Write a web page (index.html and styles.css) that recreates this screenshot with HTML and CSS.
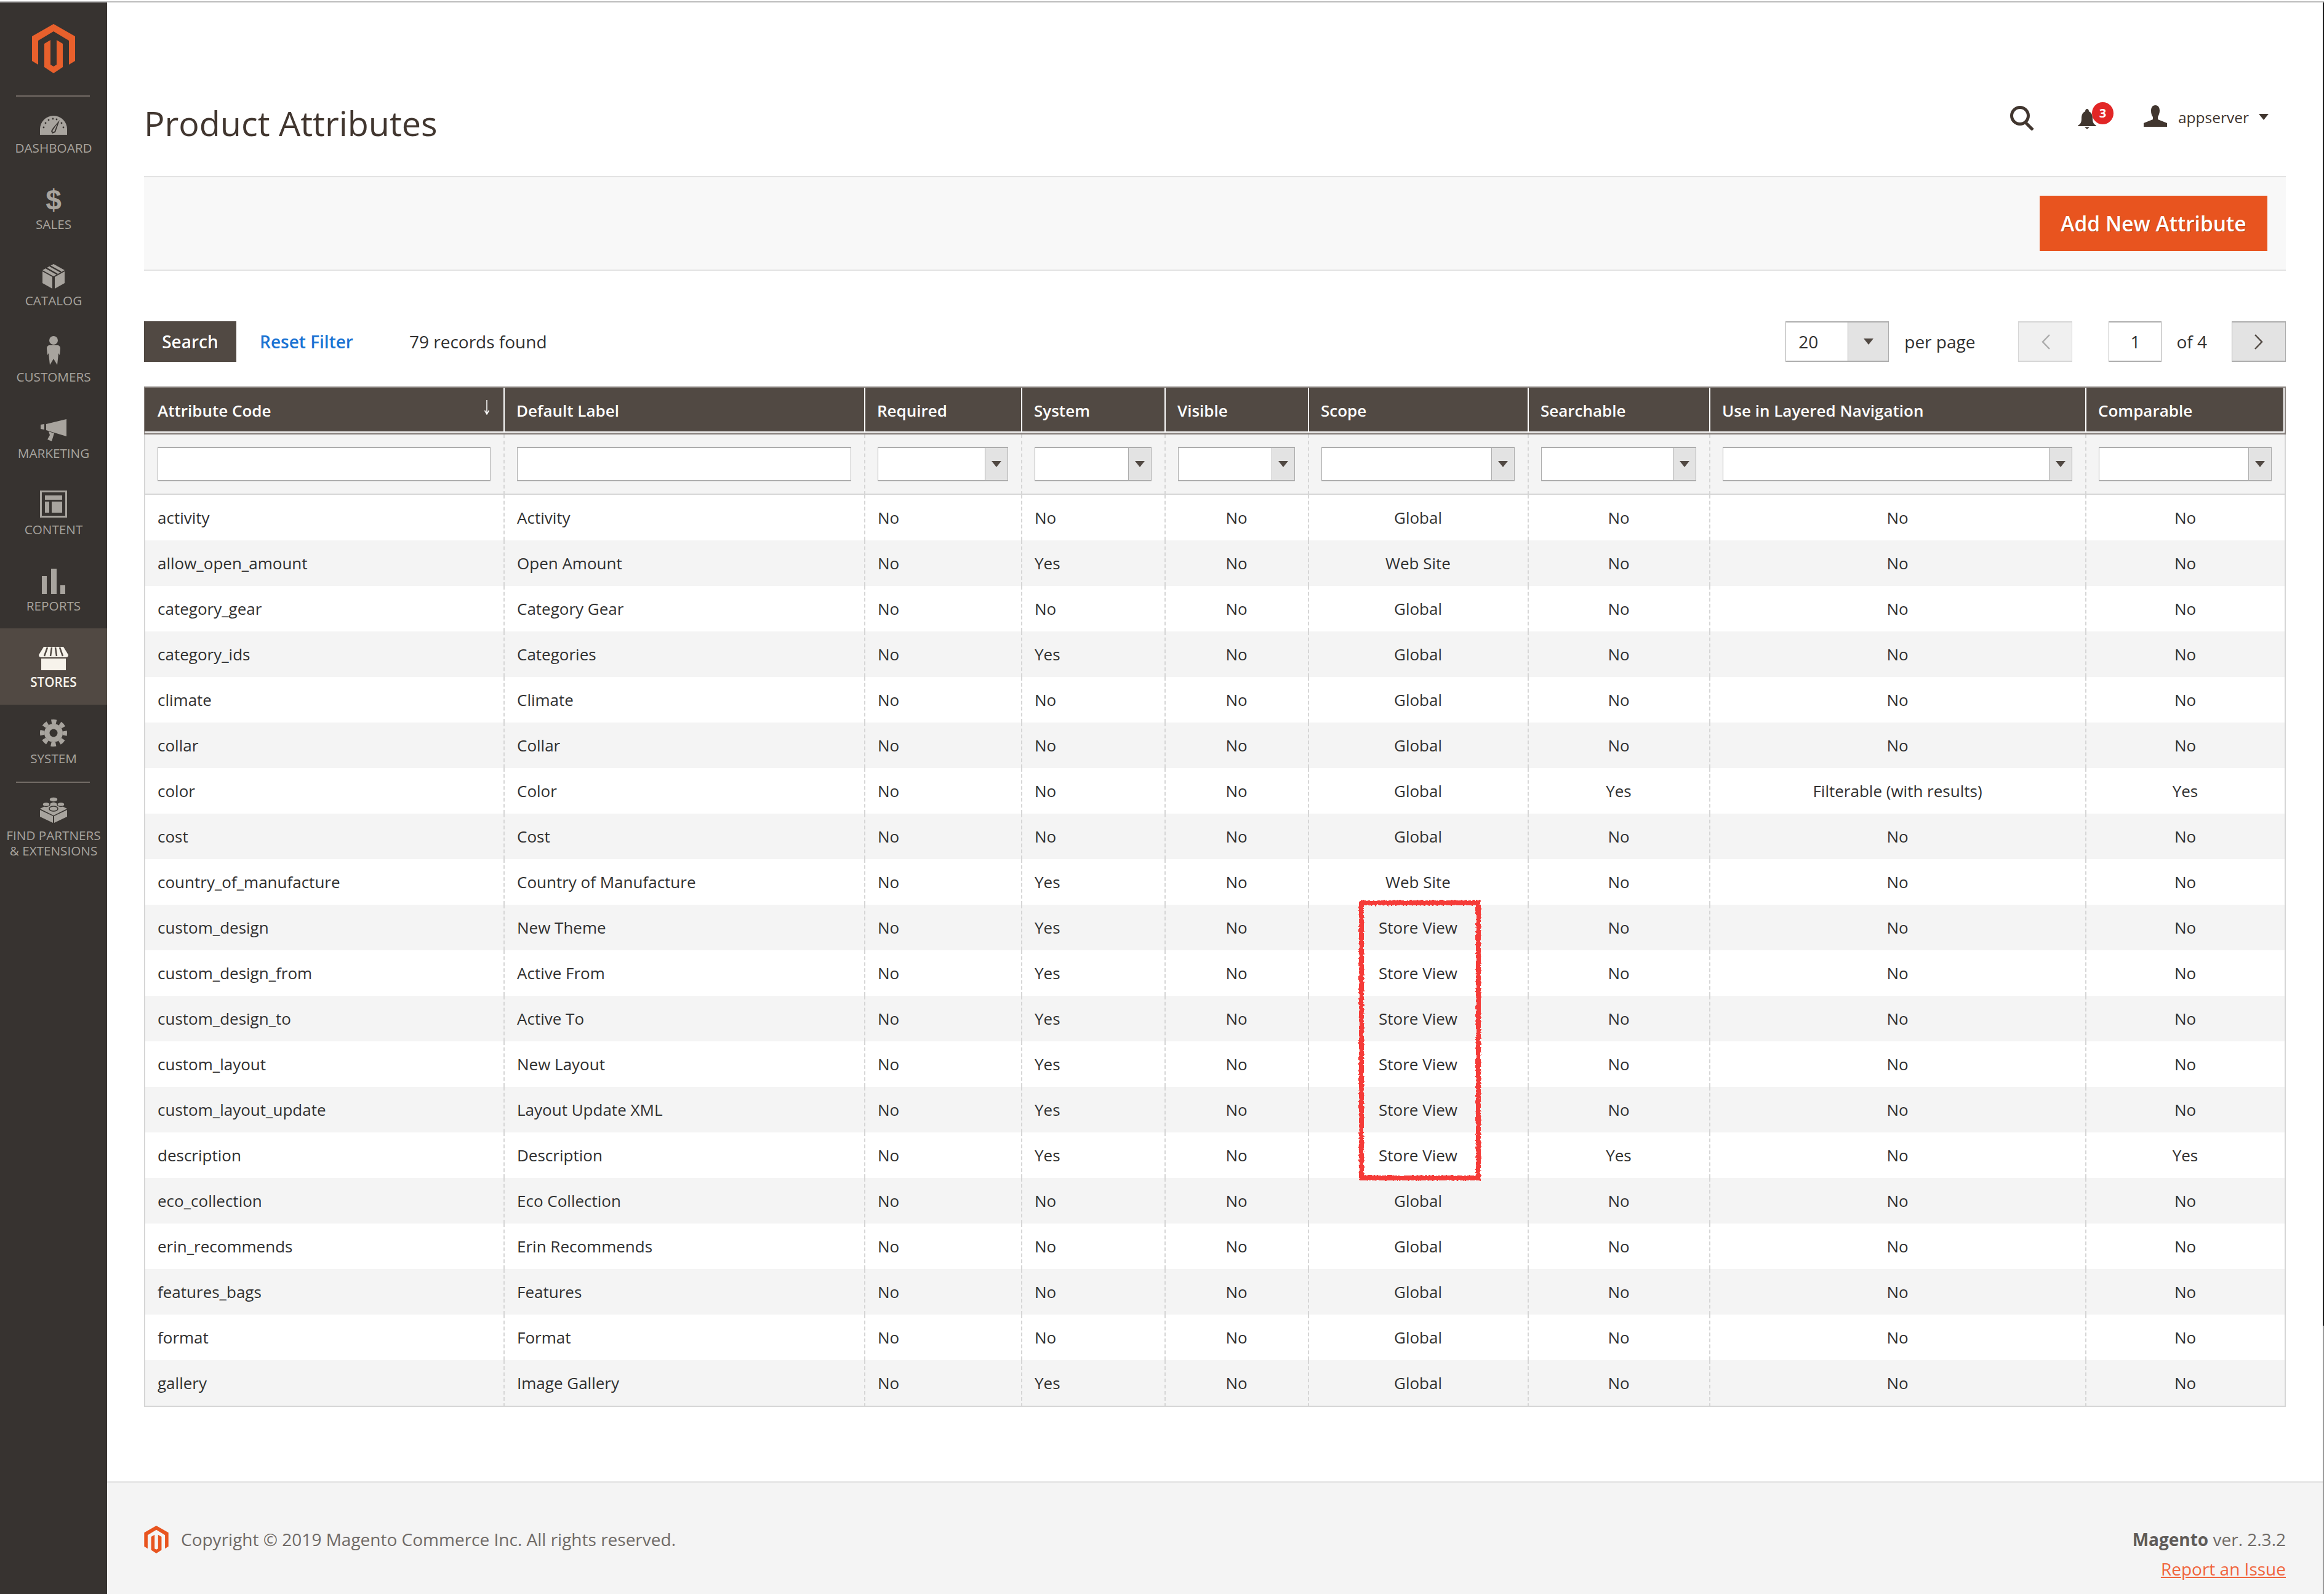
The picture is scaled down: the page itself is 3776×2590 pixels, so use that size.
FILE: index.html
```html
<!DOCTYPE html>
<html lang="en">
<head>
  <meta charset="UTF-8">
  <title>Product Attributes</title>
  <link rel="stylesheet" href="styles.css">
</head>
<body>
  <svg class="defs" width="0" height="0">
    <defs>
      <symbol id="logo" viewBox="0 0 70 80">
        <polygon points="35,0 70,20 70,60 60,66 60,27 35,12 10,27 10,66 0,60 0,20"/>
        <polygon points="20,32 30,26 30,66 35,69 40,66 40,26 50,32 50,70 35,80 20,70"/>
      </symbol>
    </defs>
  </svg>

  <div class="window-top"></div>
  <div class="shell">
    <nav class="sidebar">
      <a class="brand"><svg width="70" height="80"><use href="#logo"/></svg></a>
      <ul class="menu">
        <li class="menu-item">
          <span class="menu-icon">
            <svg class="icon-dashboard" width="44" height="31" viewBox="0 0 44 31">
              <path class="ico" d="M0 31V22A22 22 0 0 1 44 22V31Z"/>
              <g class="ico-cut">
                <circle cx="6" cy="19" r="1.4"/><circle cx="9" cy="12" r="1.4"/><circle cx="14" cy="7" r="1.4"/>
                <circle cx="21" cy="5" r="1.4"/><circle cx="27" cy="6" r="1.4"/><circle cx="35" cy="12" r="1.4"/><circle cx="38" cy="19" r="1.4"/>
                <polygon points="32,7 25,27 20,29 18,25 21,20"/>
              </g>
              <polygon class="ico" points="28.5,12.5 23.5,25.5 20.5,26.5 20.5,24"/>
            </svg>
          </span>
          <span class="menu-label">Dashboard</span>
        </li>
        <li class="menu-item">
          <span class="menu-icon"><span class="dollar">$</span></span>
          <span class="menu-label">Sales</span>
        </li>
        <li class="menu-item">
          <span class="menu-icon">
            <svg width="36" height="40" viewBox="0 0 36 40">
              <polygon class="ico" points="18,0 36,10 18,20 0,10"/>
              <path class="ico-line" d="M6 6.5L24 16.5M12 3L30 13"/>
              <polygon class="ico" points="0,12 16,21 16,40 0,31"/>
              <polygon class="ico" points="36,12 20,21 20,40 36,31"/>
            </svg>
          </span>
          <span class="menu-label">Catalog</span>
        </li>
        <li class="menu-item">
          <span class="menu-icon">
            <svg width="22" height="47" viewBox="0 0 22 47">
              <circle class="ico" cx="11" cy="7" r="7"/>
              <path class="ico" d="M5 15H17C20 15 22 17 22 20L21 31L19 28L17 47L11 37L5 47L3 28L1 31L0 20C0 17 2 15 5 15Z"/>
            </svg>
          </span>
          <span class="menu-label">Customers</span>
        </li>
        <li class="menu-item">
          <span class="menu-icon">
            <svg width="42" height="36" viewBox="0 0 42 36">
              <polygon class="ico" points="0,9 6,8 6,17 0,16"/>
              <polygon class="ico" points="9,8 42,0 42,28 9,18"/>
              <polygon class="ico" points="13,20 22,23 18,36 11,33 15,26"/>
            </svg>
          </span>
          <span class="menu-label">Marketing</span>
        </li>
        <li class="menu-item">
          <span class="menu-icon">
            <svg width="44" height="44" viewBox="0 0 44 44">
              <path class="ico" fill-rule="evenodd" d="M0 0H44V44H0ZM3 3V41H41V3Z"/>
              <rect class="ico" x="8" y="8" width="28" height="7"/>
              <rect class="ico" x="8" y="18" width="7" height="18"/>
              <rect class="ico" x="19" y="18" width="17" height="18"/>
            </svg>
          </span>
          <span class="menu-label">Content</span>
        </li>
        <li class="menu-item">
          <span class="menu-icon">
            <svg width="38" height="41" viewBox="0 0 38 41">
              <rect class="ico" x="0" y="12" width="8" height="29"/>
              <rect class="ico" x="15" y="0" width="9" height="41"/>
              <rect class="ico" x="30" y="27" width="8" height="14"/>
            </svg>
          </span>
          <span class="menu-label">Reports</span>
        </li>
        <li class="menu-item active">
          <span class="menu-icon">
            <svg width="48" height="38" viewBox="0 0 48 38">
              <path class="ico" d="M8 0H40L48 13Q48 17 44 17H4Q0 17 0 13Z"/>
              <path class="ico-line" d="M14 1L9 15M21 1L19 15M27 1L29 15M34 1L39 15"/>
              <rect class="ico" x="4" y="19" width="40" height="19"/>
            </svg>
          </span>
          <span class="menu-label">Stores</span>
        </li>
        <li class="menu-item">
          <span class="menu-icon">
            <svg width="44" height="44" viewBox="0 0 44 44">
              <circle class="ico" cx="22" cy="22" r="15"/>
              <circle class="gear-teeth" cx="22" cy="22" r="18.5"/>
              <circle class="ico-cut" cx="22" cy="22" r="6.5"/>
            </svg>
          </span>
          <span class="menu-label">System</span>
        </li>
        <li class="menu-item partners">
          <span class="menu-icon">
            <svg width="44" height="43" viewBox="0 0 44 43">
              <polygon class="ico" points="22,9 44,20 22,31 0,20"/>
              <polygon class="ico" points="0,22 21,32 21,43 0,33"/>
              <polygon class="ico" points="44,22 23,32 23,43 44,33"/>
              <g class="stud">
                <ellipse cx="22" cy="5" rx="7" ry="4"/>
                <ellipse cx="10" cy="13" rx="6" ry="3.5"/>
                <ellipse cx="34" cy="13" rx="6" ry="3.5"/>
                <ellipse cx="22" cy="20" rx="7" ry="4"/>
              </g>
            </svg>
          </span>
          <span class="menu-label">Find Partners<br>&amp; Extensions</span>
        </li>
      </ul>
    </nav>

    <main class="main">
      <header class="page-header">
        <h1 class="page-title">Product Attributes</h1>
        <div class="page-actions">
          <svg class="search-icon" width="41" height="40" viewBox="0 0 41 40">
            <circle cx="17" cy="16" r="13.5"/>
            <path d="M26 27L38 39"/>
          </svg>
          <span class="notifications">
            <svg width="30" height="33" viewBox="0 0 30 33">
              <path d="M15 0C17 0 18 2 18 4C23 6 24 11 24 16C24 22 26 25 30 27V28H0V27C4 25 6 22 6 16C6 11 7 6 12 4C12 2 13 0 15 0Z"/>
              <path d="M11 29.5H19L15 33Z"/>
            </svg>
            <span class="badge">3</span>
          </span>
          <span class="user">
            <svg class="user-icon" width="38" height="35" viewBox="0 0 38 35">
              <path d="M19 0C24 0 26 4 26 9C26 13 24 17 23 19V23L38 29V35H0V29L15 23V19C13 17 12 13 12 9C12 4 14 0 19 0Z"/>
            </svg>
            <span class="user-name">appserver</span>
            <span class="user-arrow"></span>
          </span>
        </div>
      </header>

      <div class="action-bar">
        <button class="btn-primary">Add New Attribute</button>
      </div>

      <div class="grid-toolbar">
        <button class="btn-search">Search</button>
        <a class="reset-link">Reset Filter</a>
        <span class="records">79 records found</span>
        <div class="pager">
          <div class="per-page-select">
            <span class="per-page-value">20</span>
            <span class="select-arrow"></span>
          </div>
          <span class="per-page-label">per page</span>
          <button class="pager-btn prev">
            <svg width="15" height="25" viewBox="0 0 15 25"><path d="M14 1L3 12.5L14 24"/></svg>
          </button>
          <span class="page-input">1</span>
          <span class="page-total">of 4</span>
          <button class="pager-btn next">
            <svg width="15" height="25" viewBox="0 0 15 25"><path d="M1 1L12 12.5L1 24"/></svg>
          </button>
        </div>
      </div>

      <div class="grid-wrap">
        <table class="grid">
          <colgroup>
            <col class="col-code"><col class="col-label"><col class="col-required"><col class="col-system">
            <col class="col-visible"><col class="col-scope"><col class="col-searchable"><col class="col-layered"><col class="col-comparable">
          </colgroup>
          <thead>
            <tr class="head-row">
              <th class="sorted">Attribute Code
                <svg class="sort-arrow" width="10" height="24" viewBox="0 0 10 24"><path d="M5 0V23M1.5 17L5 23L8.5 17"/></svg>
              </th>
              <th>Default Label</th><th>Required</th><th>System</th><th>Visible</th><th>Scope</th><th>Searchable</th><th>Use in Layered Navigation</th><th>Comparable</th>
            </tr>
            <tr class="filter-row">
              <td><input class="filter-input" type="text"></td>
              <td><input class="filter-input" type="text"></td>
              <td><div class="filter-select"><span class="select-arrow"></span></div></td>
              <td><div class="filter-select"><span class="select-arrow"></span></div></td>
              <td><div class="filter-select"><span class="select-arrow"></span></div></td>
              <td><div class="filter-select"><span class="select-arrow"></span></div></td>
              <td><div class="filter-select"><span class="select-arrow"></span></div></td>
              <td><div class="filter-select"><span class="select-arrow"></span></div></td>
              <td><div class="filter-select"><span class="select-arrow"></span></div></td>
            </tr>
          </thead>
          <tbody>
            <tr><td>activity</td><td>Activity</td><td>No</td><td>No</td><td>No</td><td>Global</td><td>No</td><td>No</td><td>No</td></tr>
            <tr><td>allow_open_amount</td><td>Open Amount</td><td>No</td><td>Yes</td><td>No</td><td>Web Site</td><td>No</td><td>No</td><td>No</td></tr>
            <tr><td>category_gear</td><td>Category Gear</td><td>No</td><td>No</td><td>No</td><td>Global</td><td>No</td><td>No</td><td>No</td></tr>
            <tr><td>category_ids</td><td>Categories</td><td>No</td><td>Yes</td><td>No</td><td>Global</td><td>No</td><td>No</td><td>No</td></tr>
            <tr><td>climate</td><td>Climate</td><td>No</td><td>No</td><td>No</td><td>Global</td><td>No</td><td>No</td><td>No</td></tr>
            <tr><td>collar</td><td>Collar</td><td>No</td><td>No</td><td>No</td><td>Global</td><td>No</td><td>No</td><td>No</td></tr>
            <tr><td>color</td><td>Color</td><td>No</td><td>No</td><td>No</td><td>Global</td><td>Yes</td><td>Filterable (with results)</td><td>Yes</td></tr>
            <tr><td>cost</td><td>Cost</td><td>No</td><td>No</td><td>No</td><td>Global</td><td>No</td><td>No</td><td>No</td></tr>
            <tr><td>country_of_manufacture</td><td>Country of Manufacture</td><td>No</td><td>Yes</td><td>No</td><td>Web Site</td><td>No</td><td>No</td><td>No</td></tr>
            <tr><td>custom_design</td><td>New Theme</td><td>No</td><td>Yes</td><td>No</td><td>Store View</td><td>No</td><td>No</td><td>No</td></tr>
            <tr><td>custom_design_from</td><td>Active From</td><td>No</td><td>Yes</td><td>No</td><td>Store View</td><td>No</td><td>No</td><td>No</td></tr>
            <tr><td>custom_design_to</td><td>Active To</td><td>No</td><td>Yes</td><td>No</td><td>Store View</td><td>No</td><td>No</td><td>No</td></tr>
            <tr><td>custom_layout</td><td>New Layout</td><td>No</td><td>Yes</td><td>No</td><td>Store View</td><td>No</td><td>No</td><td>No</td></tr>
            <tr><td>custom_layout_update</td><td>Layout Update XML</td><td>No</td><td>Yes</td><td>No</td><td>Store View</td><td>No</td><td>No</td><td>No</td></tr>
            <tr><td>description</td><td>Description</td><td>No</td><td>Yes</td><td>No</td><td>Store View</td><td>Yes</td><td>No</td><td>Yes</td></tr>
            <tr><td>eco_collection</td><td>Eco Collection</td><td>No</td><td>No</td><td>No</td><td>Global</td><td>No</td><td>No</td><td>No</td></tr>
            <tr><td>erin_recommends</td><td>Erin Recommends</td><td>No</td><td>No</td><td>No</td><td>Global</td><td>No</td><td>No</td><td>No</td></tr>
            <tr><td>features_bags</td><td>Features</td><td>No</td><td>No</td><td>No</td><td>Global</td><td>No</td><td>No</td><td>No</td></tr>
            <tr><td>format</td><td>Format</td><td>No</td><td>No</td><td>No</td><td>Global</td><td>No</td><td>No</td><td>No</td></tr>
            <tr><td>gallery</td><td>Image Gallery</td><td>No</td><td>Yes</td><td>No</td><td>Global</td><td>No</td><td>No</td><td>No</td></tr>
          </tbody>
        </table>

        <!-- hand drawn marker over the store view rows -->
        <svg class="marker" width="200" height="457" viewBox="0 0 200 457">
          <defs>
            <filter id="rough" x="-5%" y="-5%" width="110%" height="110%">
              <feTurbulence type="fractalNoise" baseFrequency="0.3" numOctaves="2" seed="4"/>
              <feDisplacementMap in="SourceGraphic" scale="5"/>
            </filter>
          </defs>
          <rect x="5" y="5" width="190" height="447" filter="url(#rough)"/>
        </svg>
      </div>

      <footer class="page-footer">
        <div class="copyright">
          <svg width="40" height="45"><use href="#logo"/></svg>
          <span>Copyright © 2019 Magento Commerce Inc. All rights reserved.</span>
        </div>
        <div class="footer-right">
          <div class="version"><strong>Magento</strong> ver. 2.3.2</div>
          <a class="report-link">Report an Issue</a>
        </div>
      </footer>
    </main>
    <div class="window-edge"></div>
  </div>
</body>
</html>
```

FILE: styles.css
```css
* {
  box-sizing: border-box;
}
html, body {
  margin: 0;
  padding: 0;
}
body {
  width: 3776px;
  height: 2590px;
  overflow: hidden;
  background: #fff;
  color: #303030;
  font-family: "Open Sans", "Liberation Sans", sans-serif;
  font-size: 26px;
}
button {
  font-family: inherit;
  border: none;
  padding: 0;
}
.defs {
  position: absolute;
}

.window-top {
  height: 4px;
  border-top: 2px solid #fff;
  background: #bbb;
}
.shell {
  display: flex;
  height: 2586px;
}
.window-edge {
  width: 2px;
  background: linear-gradient(#1a1a1a 2150px, #999 2150px);
}

/* sidebar */
.sidebar {
  width: 174px;
  flex: none;
  background: #373330;
  color: #a8a49e;
}
.brand {
  display: flex;
  justify-content: center;
  height: 149px;
  padding-top: 35px;
  color: #e8602c;
  fill: #e8602c;
}
.menu {
  list-style: none;
  margin: 0;
  padding: 0;
}
.menu::before {
  content: "";
  display: block;
  height: 2px;
  margin: 2px 28px -4px 26px;
  background: #736c66;
}
.menu-item {
  display: flex;
  flex-direction: column;
  align-items: center;
  height: 124px;
}
.menu-icon {
  display: flex;
  align-items: flex-end;
  height: 68px;
}
.icon-dashboard {
  margin-bottom: 2px;
}
.menu-label {
  margin-top: 7px;
  font-size: 20.7px;
  line-height: 25px;
  text-transform: uppercase;
  text-align: center;
  white-space: nowrap;
}
.ico {
  fill: #a8a49e;
}
.ico-cut {
  fill: #373330;
}
.ico-line {
  fill: none;
  stroke: #373330;
  stroke-width: 2.5;
}
.dollar {
  margin-bottom: -2px;
  font-family: "Liberation Sans", sans-serif;
  font-weight: 700;
  font-size: 46px;
  line-height: 44px;
  color: #a8a49e;
}
.gear-teeth {
  fill: none;
  stroke: #a8a49e;
  stroke-width: 7;
  stroke-dasharray: 8 6.53;
  stroke-dashoffset: 4;
}
.stud ellipse {
  fill: #a8a49e;
  stroke: #373330;
  stroke-width: 1.5;
}
.menu-item.active {
  background: #514943;
  color: #f7f3eb;
}
.menu-item.active .menu-label {
  font-weight: 600;
}
.menu-item.active .ico {
  fill: #f7f3eb;
}
.menu-item.active .ico-line {
  stroke: #514943;
}
.partners {
  height: auto;
  padding-top: 1px;
}
.partners::before {
  content: "";
  display: block;
  width: 120px;
  height: 2px;
  margin-right: 2px;
  background: #736c66;
}
.partners .menu-icon {
  height: 65px;
}
.partners .menu-label {
  margin-top: 8px;
}

/* main column */
.main {
  flex: 1;
  min-width: 0;
  display: flex;
  flex-direction: column;
}
.page-header {
  height: 282px;
  padding: 108px 60px 0;
  display: flex;
  align-items: center;
  justify-content: space-between;
}
.page-title {
  margin: 0;
  font-size: 55.7px;
  font-weight: 400;
  color: #41362f;
}
.page-actions {
  display: flex;
  align-items: center;
  margin: -18px 28px 0 0;
  color: #41362f;
  fill: #41362f;
}
.search-icon {
  margin-top: 4px;
  fill: none;
  stroke: #41362f;
  stroke-width: 5;
}
.notifications {
  position: relative;
  display: flex;
  margin: 6px 0 0 70px;
}
.badge {
  position: absolute;
  left: 23px;
  top: -11px;
  width: 35px;
  height: 36px;
  border-radius: 50%;
  background: #e22626;
  color: #fff;
  font-size: 20px;
  font-weight: 700;
  line-height: 36px;
  text-align: center;
}
.user {
  display: flex;
  align-items: center;
  margin-left: 77px;
}
.user-icon {
  margin-top: -3px;
}
.user-name {
  margin-left: 18px;
  font-size: 24.5px;
}
.user-arrow {
  width: 0;
  height: 0;
  margin-left: 16px;
  border-left: 8px solid transparent;
  border-right: 8px solid transparent;
  border-top: 10px solid #41362f;
}

.action-bar {
  display: flex;
  justify-content: flex-end;
  align-items: center;
  height: 154px;
  margin: 0 60px;
  padding-right: 30px;
  background: #f8f8f8;
  border-top: 2px solid #e3e3e3;
  border-bottom: 2px solid #e3e3e3;
}
.btn-primary {
  width: 370px;
  height: 90px;
  background: #e8541f;
  color: #fff;
  font-size: 33.5px;
  font-weight: 600;
  text-shadow: 1px 1px 0 rgba(0,0,0,0.25);
}

.grid-toolbar {
  display: flex;
  align-items: center;
  height: 66px;
  margin: 82px 60px 0;
}
.btn-search {
  width: 150px;
  height: 66px;
  background: #514943;
  color: #fff;
  font-size: 28px;
  font-weight: 600;
  text-shadow: 1px 1px 0 rgba(0,0,0,0.4);
}
.reset-link {
  margin-left: 38px;
  color: #1a73d3;
  font-size: 28px;
  font-weight: 600;
}
.records {
  margin-left: 91px;
  font-size: 28px;
}
.pager {
  display: flex;
  align-items: center;
  margin-left: auto;
  font-size: 28px;
}
.per-page-select {
  display: flex;
  width: 168px;
  height: 66px;
  background: #fff;
  border: 1px solid #adadad;
  border-top-width: 2px;
  border-bottom-width: 2px;
}
.per-page-value {
  flex: 1;
  padding-left: 20px;
  line-height: 62px;
}
.per-page-select .select-arrow {
  width: 66px;
}
.select-arrow {
  display: flex;
  align-items: center;
  justify-content: center;
  width: 37px;
  flex: none;
  background: #e3e3e3;
  border-left: 1px solid #adadad;
}
.select-arrow::after {
  content: "";
  width: 0;
  height: 0;
  border-left: 8px solid transparent;
  border-right: 8px solid transparent;
  border-top: 10px solid #514943;
}
.per-page-label {
  margin-left: 25px;
}
.pager-btn {
  display: flex;
  align-items: center;
  justify-content: center;
  width: 88px;
  height: 66px;
  border-style: solid;
  border-width: 2px 1px;
}
.pager-btn svg {
  fill: none;
  stroke-width: 2.5;
}
.pager-btn.prev {
  margin-left: 70px;
  background: #f0f0f0;
  border-color: #d6d6d6;
  stroke: #adadad;
}
.pager-btn.next {
  margin-left: 40px;
  background: #e3e3e3;
  border-color: #adadad;
  stroke: #514943;
}
.page-input {
  width: 86px;
  height: 66px;
  margin-left: 59px;
  background: #fff;
  border: 1px solid #adadad;
  border-top-width: 2px;
  border-bottom-width: 2px;
  text-align: center;
  line-height: 62px;
}
.page-total {
  margin-left: 24px;
}

/* grid */
.grid-wrap {
  position: relative;
  margin: 40px 60px 0;
}
.grid {
  width: 3480px;
  table-layout: fixed;
  border-collapse: separate;
  border-spacing: 0;
}
.col-code { width: 584px; }
.col-label { width: 586px; }
.col-required { width: 255px; }
.col-system { width: 233px; }
.col-visible { width: 233px; }
.col-scope { width: 357px; }
.col-searchable { width: 295px; }
.col-layered { width: 611px; }
.col-comparable { width: 326px; }

.head-row th {
  position: relative;
  height: 78px;
  padding: 0 20px 0 21px;
  background: #514943;
  border-top: 2px solid #8a837f;
  border-bottom: 3px solid #8a837f;
  box-shadow: inset 2px 0 0 #fff, inset 0 -2px 0 #fff;
  color: #fff;
  font-size: 26px;
  font-weight: 600;
  text-align: left;
}
.head-row th:first-child {
  border-left: 1px solid #8a837f;
  box-shadow: inset 0 -2px 0 #fff;
}
.head-row th:last-child {
  border-right: 2px solid #8a837f;
  box-shadow: inset 2px 0 0 #fff, inset 0 -2px 0 #fff, inset -2px 0 0 #fff;
}
.sort-arrow {
  position: absolute;
  right: 22px;
  top: 20px;
  fill: none;
  stroke: #fff;
  stroke-width: 1.5;
}
.filter-row td {
  height: 98px;
  padding: 0 21px 0 20px;
  background: #f4f4f4;
  border-left: 2px dashed #d6d6d6;
  border-bottom: 2px solid #d6d6d6;
}
.filter-input {
  display: block;
  width: 100%;
  height: 56px;
  background: #fff;
  border: 1px solid #adadad;
  border-top-width: 2px;
  border-bottom-width: 2px;
  border-radius: 0;
  outline: none;
}
.filter-select {
  display: flex;
  justify-content: flex-end;
  height: 56px;
  background: #fff;
  border: 1px solid #adadad;
  border-top-width: 2px;
  border-bottom-width: 2px;
}
tbody td {
  height: 74px;
  padding: 0 21px 0 20px;
  border-left: 2px dashed #d6d6d6;
  white-space: nowrap;
}
tbody tr:nth-child(even) td {
  background: #f4f4f4;
}
tbody td:nth-child(n+5) {
  text-align: center;
}
.grid td:first-child {
  border-left: 2px solid #d6d6d6;
}
.grid td:last-child {
  border-right: 2px solid #d6d6d6;
}
tbody tr:last-child td {
  height: 76px;
  border-bottom: 2px solid #d6d6d6;
}
.marker {
  position: absolute;
  left: 1973px;
  top: 834px;
  pointer-events: none;
}
.marker rect {
  fill: none;
  stroke: #f53b39;
  stroke-width: 8;
}

/* footer */
.page-footer {
  display: flex;
  justify-content: space-between;
  margin-top: auto;
  height: 183px;
  padding: 69px 60px 0;
  background: #f4f4f4;
  border-top: 2px solid #e0e0e0;
  color: #6f6a66;
  font-size: 28px;
}
.copyright {
  display: flex;
  align-items: center;
  height: 46px;
  gap: 20px;
  fill: #e8541f;
}
.footer-right {
  text-align: right;
  line-height: 48px;
  margin-top: -1px;
}
.version strong {
  color: #5f5b58;
}
.report-link {
  color: #f0643c;
  text-decoration: underline;
}
```
